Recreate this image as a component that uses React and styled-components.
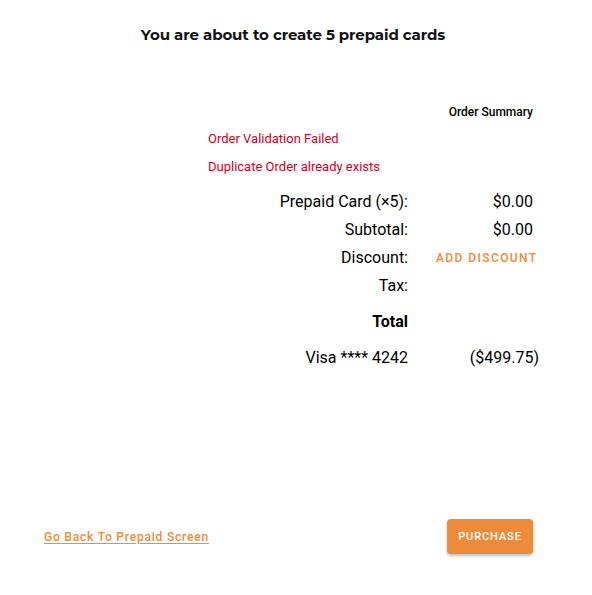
import React from "react";
import styled, { createGlobalStyle } from "styled-components";

const GlobalStyle = createGlobalStyle`
  body {
    margin: 0;
    background: #fff;
    font-family: Roboto, "Liberation Sans", sans-serif;
    color: #000;
  }
`;

const Page = styled.div`
  width: 592px;
  height: 595px;
  box-sizing: border-box;
  padding-top: 25px;
  display: flex;
  flex-direction: column;
`;

const Heading = styled.h2`
  margin: 0 0 0 -6px;
  text-align: center;
  font-family: Montserrat, "Open Sans", sans-serif;
  font-weight: 700;
  font-size: 15px;
  letter-spacing: -0.1px;
  line-height: 20px;
  color: #111;
`;

const Summary = styled.div`
  margin: 59px 0 0 208px;
  width: 325px;
  display: flex;
  flex-direction: column;
`;

const SummaryTitle = styled.div`
  align-self: flex-end;
  font-size: 12px;
  font-weight: 500;
  line-height: 16px;
  margin-bottom: 11px;
`;

const ErrorText = styled.div`
  color: #d0021b;
  font-size: 13px;
  line-height: 16px;
  margin-bottom: 12px;
`;

const Grid = styled.div`
  display: grid;
  grid-template-columns: 1fr 97px;
  column-gap: 28px;
  margin-top: 5px;
`;

const Label = styled.div`
  text-align: right;
  font-size: 16px;
  line-height: 20px;
  font-weight: ${(p) => (p.$bold ? 700 : 400)};
  margin-top: ${(p) => p.$gap ?? 8}px;
`;

const Value = styled.div`
  text-align: right;
  white-space: nowrap;
  font-size: 16px;
  line-height: 20px;
  margin-top: ${(p) => p.$gap ?? 8}px;
  margin-right: ${(p) => (p.$wide ? -6 : 0)}px;
`;

const TextButton = styled.button`
  justify-self: start;
  margin-top: ${(p) => p.$gap ?? 8}px;
  padding: 0;
  border: none;
  background: none;
  white-space: nowrap;
  text-align: left;
  font-family: Roboto, "Liberation Sans", sans-serif;
  font-size: 12px;
  font-weight: 500;
  letter-spacing: 1.4px;
  line-height: 20px;
  color: #ed8b3a;
  cursor: pointer;
`;

const Footer = styled.div`
  margin-top: auto;
  margin-bottom: 41px;
  padding: 0 59px 0 44px;
  display: flex;
  align-items: center;
  justify-content: space-between;
`;

const BackLink = styled.a`
  font-size: 12px;
  font-weight: 500;
  letter-spacing: 0.8px;
  color: #ed8b3a;
  text-decoration: underline;
  text-underline-offset: 2px;
  cursor: pointer;
`;

const PurchaseButton = styled.button`
  width: 86px;
  height: 35px;
  border: none;
  border-radius: 4px;
  background: #ed8b3a;
  color: #fff;
  font-family: Roboto, "Liberation Sans", sans-serif;
  font-size: 11px;
  font-weight: 500;
  letter-spacing: 0.9px;
  box-shadow: 0 2px 3px rgba(0, 0, 0, 0.25);
  cursor: pointer;
`;

export default function App() {
  return (
    <>
      <GlobalStyle />
      <Page>
        <Heading>You are about to create 5 prepaid cards</Heading>
        <Summary>
          <SummaryTitle>Order Summary</SummaryTitle>
          <ErrorText>Order Validation Failed</ErrorText>
          <ErrorText>Duplicate Order already exists</ErrorText>
          <Grid>
            <Label $gap={0}>Prepaid Card (×5):</Label>
            <Value $gap={0}>$0.00</Value>
            <Label>Subtotal:</Label>
            <Value>$0.00</Value>
            <Label>Discount:</Label>
            <TextButton>ADD DISCOUNT</TextButton>
            <Label>Tax:</Label>
            <Value></Value>
            <Label $bold $gap={16}>Total</Label>
            <Value $gap={16}></Value>
            <Label $gap={16}>Visa **** 4242</Label>
            <Value $gap={16} $wide>($499.75)</Value>
          </Grid>
        </Summary>
        <Footer>
          <BackLink>Go Back To Prepaid Screen</BackLink>
          <PurchaseButton>PURCHASE</PurchaseButton>
        </Footer>
      </Page>
    </>
  );
}
